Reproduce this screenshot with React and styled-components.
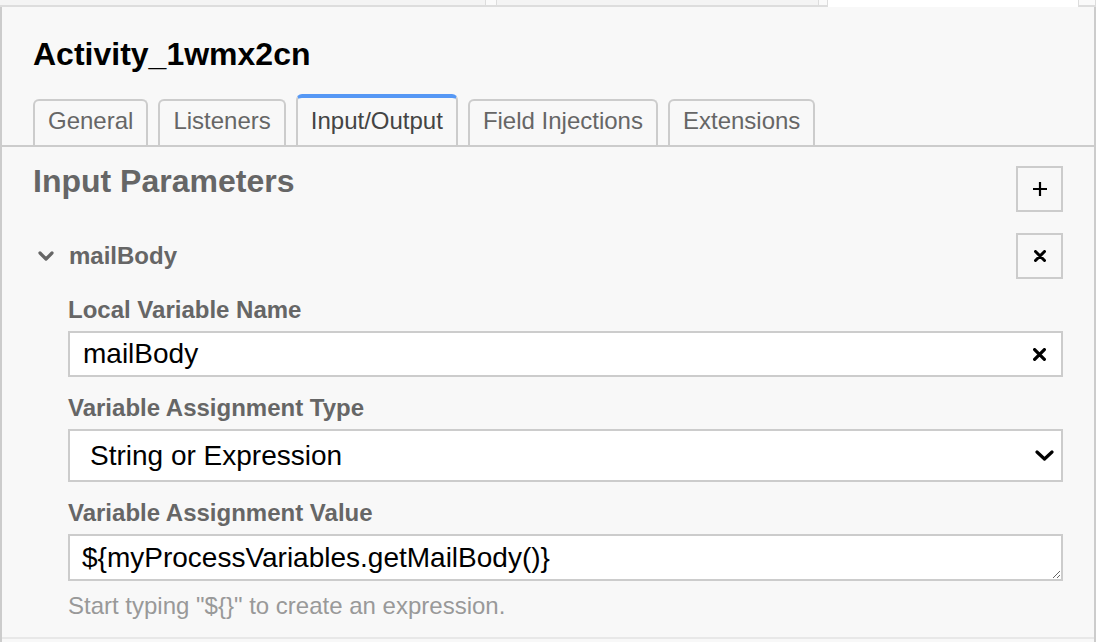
import React from 'react';
import styled, { createGlobalStyle } from 'styled-components';

const GlobalStyle = createGlobalStyle`
  html, body {
    margin: 0;
    padding: 0;
    background: #fff;
    overflow: hidden;
  }
  body {
    font-family: "Liberation Sans", Arial, Helvetica, sans-serif;
  }
`;

const Page = styled.div`
  width: 1096px;
  height: 642px;
  display: flex;
  flex-direction: column;
`;

// bottoms of the tabs of the panel above
const UpperTabs = styled.div`
  display: flex;
  height: 7px;
  flex-shrink: 0;
`;

const UpperTab = styled.div`
  box-sizing: border-box;
  width: ${p => p.$width}px;
  background: ${p => (p.$active ? '#fff' : p.$gap ? '#fafafa' : '#f4f4f4')};
  border-bottom: ${p => (p.$active ? 'none' : '2px solid #ddd')};
  border-left: ${p => (p.$gap ? '1px solid #ddd' : 'none')};
  border-right: ${p => (p.$gap ? '1px solid #ddd' : 'none')};
`;

const Panel = styled.div`
  flex: 1;
  display: flex;
  flex-direction: column;
  background: #f8f8f8;
  border-left: 2px solid #ccc;
  border-right: 2px solid #ccc;
`;

const Header = styled.div`
  padding: 28px 31px 0;
`;

const Title = styled.h1`
  margin: 0;
  font-size: 32px;
  line-height: 38px;
  font-weight: 700;
  color: #000;
`;

const TabBar = styled.div`
  display: flex;
  align-items: flex-end;
  gap: 10px;
  margin-top: 21px;
  padding: 0 31px;
  border-bottom: 2px solid #ccc;
`;

const Tab = styled.div`
  box-sizing: border-box;
  padding: ${p => (p.$active ? '9px' : '6px')} 13px 10px;
  border: 2px solid #ccc;
  border-top: ${p => (p.$active ? '4px solid #5698f5' : '2px solid #ccc')};
  border-bottom: none;
  border-radius: 6px 6px 0 0;
  background: #f8f8f8;
  font-size: 24px;
  line-height: 28px;
  color: ${p => (p.$active ? '#444' : '#666')};
  white-space: nowrap;
`;

const Section = styled.div`
  padding: 15px 31px 0;
`;

const SectionHeader = styled.div`
  display: flex;
  justify-content: space-between;
  align-items: flex-start;
`;

const SectionTitle = styled.h2`
  margin: 0;
  font-size: 32px;
  line-height: 38px;
  font-weight: 700;
  color: #666;
`;

const SquareButton = styled.button`
  box-sizing: border-box;
  width: 47px;
  height: 46px;
  margin-top: ${p => p.$offset || 0}px;
  padding: 0;
  display: flex;
  align-items: center;
  justify-content: center;
  border: 2px solid #ccc;
  background: #f8f8f8;
`;

const ParamRow = styled.div`
  display: flex;
  justify-content: space-between;
  align-items: center;
  margin-top: 21px;
`;

const ParamToggle = styled.div`
  display: flex;
  align-items: center;
  gap: 15px;
  padding-left: 5px;
  font-size: 24px;
  font-weight: 700;
  color: #666;
`;

const ParamBody = styled.div`
  margin-left: 35px;
  padding-top: 17px;
  display: flex;
  flex-direction: column;
  gap: 17px;
`;

const Field = styled.div`
  display: flex;
  flex-direction: column;
`;

const Label = styled.label`
  font-size: 24px;
  line-height: 28px;
  font-weight: 700;
  color: #666;
  margin-bottom: 7px;
`;

const Control = styled.div`
  box-sizing: border-box;
  height: ${p => p.$height}px;
  display: flex;
  align-items: center;
  padding: 0 ${p => p.$padRight}px 0 ${p => p.$padLeft}px;
  border: 2px solid #ccc;
  background: #fff;
`;

const TextInput = styled.input`
  flex: 1;
  min-width: 0;
  border: none;
  outline: none;
  padding: 0;
  background: transparent;
  font-family: inherit;
  font-size: 28px;
  color: #000;
`;

const SelectText = styled.span`
  flex: 1;
  font-size: 28px;
  color: #000;
`;

const TextArea = styled.textarea`
  box-sizing: border-box;
  height: 47px;
  padding: 6px 12px 0;
  border: 2px solid #ccc;
  background: #fff;
  outline: none;
  resize: vertical;
  overflow: hidden;
  font-family: inherit;
  font-size: 28px;
  line-height: 32px;
  color: #000;
`;

const Hint = styled.div`
  margin-top: -6px;
  font-size: 24px;
  line-height: 28px;
  color: #999;
`;

const Divider = styled.div`
  margin-top: 17px;
  height: 2px;
  background: #e8e8e8;
`;

const Chevron = ({ color = '#666', w = 16, h = 10 }) => (
  <svg width={w} height={h} viewBox={`0 0 ${w} ${h}`}>
    <polyline
      points={`2,2 ${w / 2},${h - 2} ${w - 2},2`}
      fill="none"
      stroke={color}
      strokeWidth="3.2"
      strokeLinecap="round"
      strokeLinejoin="round"
    />
  </svg>
);

const Cross = ({ size = 12 }) => (
  <svg width={size} height={size} viewBox="0 0 12 12">
    <path d="M1.5 1.5 L10.5 10.5 M10.5 1.5 L1.5 10.5" stroke="#000" strokeWidth="3" strokeLinecap="round" />
  </svg>
);

const Plus = () => (
  <svg width="16" height="16" viewBox="0 0 16 16">
    <path d="M8 1 V15 M1 8 H15" stroke="#000" strokeWidth="2.2" />
  </svg>
);

const upperTabs = [
  { width: 485 },
  { width: 12, gap: true },
  { width: 321 },
  { width: 10, gap: true },
  { width: 250, active: true },
  { width: 18, gap: true },
];

const tabs = ['General', 'Listeners', 'Input/Output', 'Field Injections', 'Extensions'];

export default function App() {
  return (
    <Page>
      <GlobalStyle />
      <UpperTabs>
        {upperTabs.map((t, i) => (
          <UpperTab key={i} $width={t.width} $gap={t.gap} $active={t.active} />
        ))}
      </UpperTabs>
      <Panel>
        <Header>
          <Title>Activity_1wmx2cn</Title>
        </Header>
        <TabBar>
          {tabs.map(t => (
            <Tab key={t} $active={t === 'Input/Output'}>{t}</Tab>
          ))}
        </TabBar>
        <Section>
          <SectionHeader>
            <SectionTitle>Input Parameters</SectionTitle>
            <SquareButton $offset={4}><Plus /></SquareButton>
          </SectionHeader>
          <ParamRow>
            <ParamToggle>
              <Chevron />
              mailBody
            </ParamToggle>
            <SquareButton><Cross /></SquareButton>
          </ParamRow>
          <ParamBody>
            <Field>
              <Label>Local Variable Name</Label>
              <Control $height={46} $padLeft={13} $padRight={15}>
                <TextInput defaultValue="mailBody" readOnly />
                <Cross size={13} />
              </Control>
            </Field>
            <Field>
              <Label>Variable Assignment Type</Label>
              <Control $height={53} $padLeft={20} $padRight={7}>
                <SelectText>String or Expression</SelectText>
                <Chevron color="#000" w={19} h={11} />
              </Control>
            </Field>
            <Field>
              <Label>Variable Assignment Value</Label>
              <TextArea defaultValue="${myProcessVariables.getMailBody()}" readOnly rows={1} />
            </Field>
            <Hint>Start typing "{'${}'}" to create an expression.</Hint>
          </ParamBody>
        </Section>
        <Divider />
      </Panel>
    </Page>
  );
}
